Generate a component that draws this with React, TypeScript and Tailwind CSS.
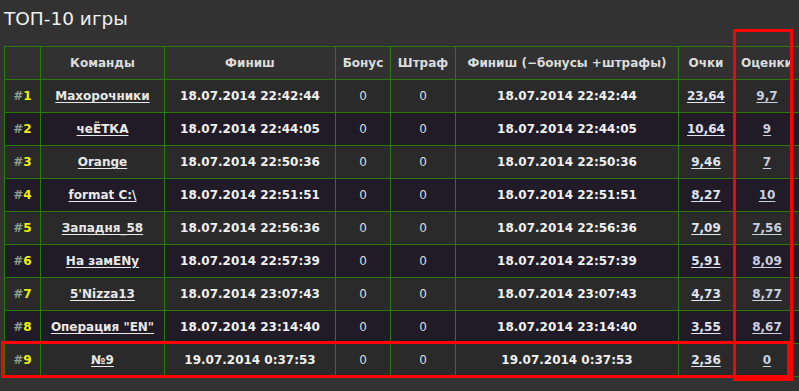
import React from 'react';

type Row = {
  place: number;
  team: string;
  finish: string;
  bonus: string;
  penalty: string;
  net: string;
  points: string;
  rating: string;
};

const ROWS: Row[] = [
  { place: 1, team: 'Махорочники', finish: '18.07.2014 22:42:44', bonus: '0', penalty: '0', net: '18.07.2014 22:42:44', points: '23,64', rating: '9,7' },
  { place: 2, team: 'чеЁТКА', finish: '18.07.2014 22:44:05', bonus: '0', penalty: '0', net: '18.07.2014 22:44:05', points: '10,64', rating: '9' },
  { place: 3, team: 'Orange', finish: '18.07.2014 22:50:36', bonus: '0', penalty: '0', net: '18.07.2014 22:50:36', points: '9,46', rating: '7' },
  { place: 4, team: 'format C:\\', finish: '18.07.2014 22:51:51', bonus: '0', penalty: '0', net: '18.07.2014 22:51:51', points: '8,27', rating: '10' },
  { place: 5, team: 'Западня_58', finish: '18.07.2014 22:56:36', bonus: '0', penalty: '0', net: '18.07.2014 22:56:36', points: '7,09', rating: '7,56' },
  { place: 6, team: 'На замENу', finish: '18.07.2014 22:57:39', bonus: '0', penalty: '0', net: '18.07.2014 22:57:39', points: '5,91', rating: '8,09' },
  { place: 7, team: "5'Nizza13", finish: '18.07.2014 23:07:43', bonus: '0', penalty: '0', net: '18.07.2014 23:07:43', points: '4,73', rating: '8,77' },
  { place: 8, team: 'Операция "EN"', finish: '18.07.2014 23:14:40', bonus: '0', penalty: '0', net: '18.07.2014 23:14:40', points: '3,55', rating: '8,67' },
  { place: 9, team: '№9', finish: '19.07.2014 0:37:53', bonus: '0', penalty: '0', net: '19.07.2014 0:37:53', points: '2,36', rating: '0' },
];

const cell = 'border border-[#2a7a08] text-center align-middle p-0 whitespace-nowrap';

export default function App() {
  return (
    <div
      className="relative w-[799px] h-[391px] overflow-hidden bg-[#323232] text-[#e6e6e6]"
      style={{ fontFamily: '"DejaVu Sans", Verdana, sans-serif' }}
    >
      <h1 className="pl-[4px] pt-[7px] h-[46px] text-[18.5px] leading-[24px] text-[#f0f0f0] font-normal">
        ТОП-10 игры
      </h1>

      <table className="ml-[4px] w-[796px] border-collapse table-fixed text-[12px] font-bold">
        <colgroup>
          <col className="w-[36px]" />
          <col className="w-[124px]" />
          <col className="w-[171px]" />
          <col className="w-[55px]" />
          <col className="w-[65px]" />
          <col className="w-[223px]" />
          <col className="w-[55px]" />
          <col className="w-[67px]" />
        </colgroup>
        <thead>
          <tr className="h-[33px] bg-[#313131] text-[#dcdcdc]">
            <th className={cell}></th>
            <th className={cell}>Команды</th>
            <th className={cell}>Финиш</th>
            <th className={cell}>Бонус</th>
            <th className={cell}>Штраф</th>
            <th className={cell}>Финиш (−бонусы +штрафы)</th>
            <th className={cell}>Очки</th>
            <th className={cell}>Оценки</th>
          </tr>
        </thead>
        <tbody>
          {ROWS.map((r, i) => (
            <tr key={r.place} className={`h-[33px] ${i % 2 === 0 ? 'bg-[#2a2a2a]' : 'bg-[#201b27]'}`}>
              <td className={cell}>
                <span className="text-[#8fa08f]">#</span>
                <span className="text-[#f2f200]">{r.place}</span>
              </td>
              <td className={cell}>
                <a className="underline underline-offset-2 text-[#e8e8e8]">{r.team}</a>
              </td>
              <td className={`${cell} text-[#f0f0f0]`}>{r.finish}</td>
              <td className={`${cell} font-normal text-[#dddddd]`}>{r.bonus}</td>
              <td className={`${cell} font-normal text-[#dddddd]`}>{r.penalty}</td>
              <td className={`${cell} text-[#f0f0f0]`}>{r.net}</td>
              <td className={cell}>
                <a className="underline underline-offset-2 text-[#e0e4ee]">{r.points}</a>
              </td>
              <td className={cell}>
                <a className="underline underline-offset-2 text-[#c8d0e0]">{r.rating}</a>
              </td>
            </tr>
          ))}
        </tbody>
      </table>

      {/* red annotation boxes */}
      <div className="absolute left-[733px] top-[29px] w-[60px] h-[352px] border-[3px] border-[#ff0000]" />
      <div className="absolute left-[1px] top-[341px] w-[789px] h-[37px] border-[3px] border-[#ff0000]" />
    </div>
  );
}
